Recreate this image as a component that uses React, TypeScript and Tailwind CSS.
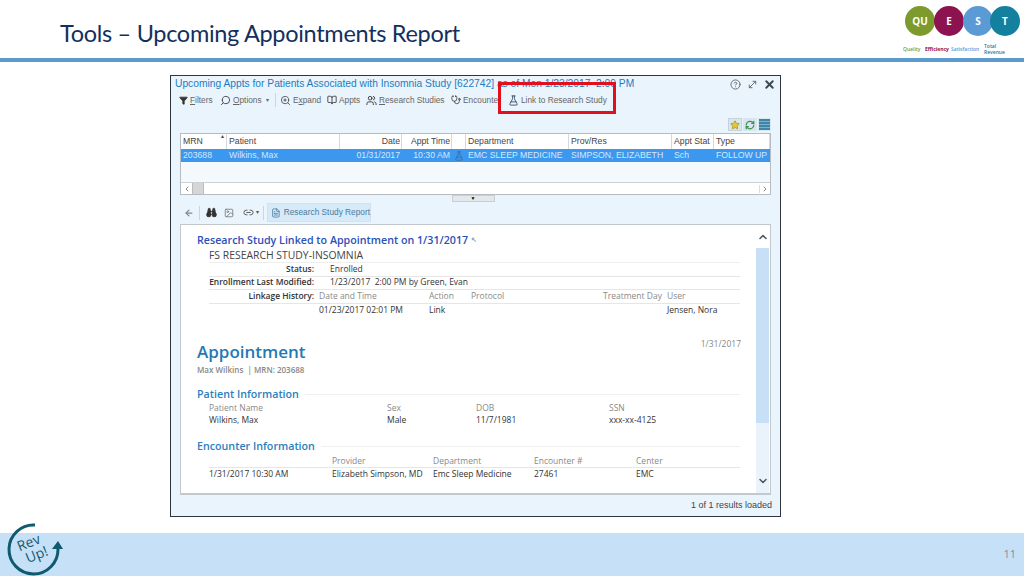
import React from "react";
import {
  ArrowLeft,
  Binoculars,
  ChevronDown,
  ChevronLeft,
  ChevronRight,
  ChevronUp,
  CircleHelp,
  FileText,
  Filter,
  FlaskConical,
  Image,
  Link2,
  MoveDiagonal,
  RefreshCw,
  Search,
  Star,
  Stethoscope,
  Users,
  X,
  ZoomIn,
  BookOpen,
} from "lucide-react";

const toolbarItems = [
  { label: "Filters", u: 0, icon: <Filter size={9} fill="#333" className="text-[#333]" />, w: "w-[41px]" },
  { label: "Options", u: 0, icon: <Search size={11} className="text-[#444] -scale-x-100" />, w: "w-[60px]" },
  { label: "Expand", u: 1, icon: <ZoomIn size={11} className="text-[#555]" />, w: "w-[47px]" },
  { label: "Appts", u: -1, icon: <BookOpen size={10} className="text-[#333]" />, w: "w-[39px]" },
  { label: "Research Studies", u: 0, icon: <Users size={11} className="text-[#333]" />, w: "w-[85px]" },
  { label: "Encounter", u: -1, icon: <Stethoscope size={10} className="text-[#444]" />, w: "w-[57px]" },
];

const columns = [
  { label: "MRN", w: "w-[46px]" },
  { label: "Patient", w: "w-[113px]" },
  { label: "Date", w: "w-[62px]", right: true },
  { label: "Appt Time", w: "w-[50px]", right: true },
  { label: "", w: "w-[14px]" },
  { label: "Department", w: "w-[103px]" },
  { label: "Prov/Res", w: "w-[103px]" },
  { label: "Appt Stat", w: "w-[42px]" },
  { label: "Type", w: "w-[56px]" },
];

const selectedRow = [
  "203688",
  "Wilkins, Max",
  "01/31/2017",
  "10:30 AM",
  "",
  "EMC SLEEP MEDICINE",
  "SIMPSON, ELIZABETH",
  "Sch",
  "FOLLOW UP",
];

const SectionHeading = ({ title, mt }: { title: string; mt: string }) => (
  <div className={`flex items-center gap-[6px] h-[14px] ${mt}`}>
    <span className="text-[10.7px] font-semibold text-[#2b80bd] whitespace-nowrap">{title}</span>
    <div className="flex-1 h-px bg-[#f0f0f0]" />
  </div>
);

const DetailRow = ({ label, children, line = true }: { label: string; children: React.ReactNode; line?: boolean }) => (
  <div className={`flex items-center h-[13.5px] ${line ? "border-b border-[#e6e6e6]" : ""}`}>
    <span className="w-[105px] shrink-0 text-right text-[8.45px] font-semibold text-[#333] whitespace-nowrap">{label}</span>
    {children}
  </div>
);

const App = () => {
  return (
    <div className="relative w-[1024px] h-[576px] flex flex-col bg-white overflow-hidden font-['Open_Sans',sans-serif]">
      <header className="h-[62px] shrink-0 flex justify-between border-b-4 border-[#5b9bd0]">
        <h1 className="pl-[60px] pt-[16px] text-[23.5px] leading-[34px] tracking-[-0.3px] text-[#12305e] font-['Lato',sans-serif]">
          Tools – Upcoming Appointments Report
        </h1>
        <div className="w-[122px] pt-[6px] flex flex-col">
          <div className="flex pl-[3px] text-white font-bold text-[10px]">
            <div className="w-[30px] h-[30px] rounded-full bg-[#7d9a2c] flex items-center justify-center">QU</div>
            <div className="w-[30px] h-[30px] rounded-full bg-[#8c1250] flex items-center justify-center -ml-px">E</div>
            <div className="w-[30px] h-[30px] rounded-full bg-[#5a9bd5] flex items-center justify-center -ml-px">S</div>
            <div className="w-[30px] h-[30px] rounded-full bg-[#14809f] flex items-center justify-center -ml-[3px]">T</div>
          </div>
          <div className="flex items-center h-[20px] pl-px pt-[5px] text-[5px] leading-[6px] font-semibold whitespace-nowrap">
            <span className="w-[22px] text-[#7d9a2c]">Quality</span>
            <span className="w-[26px] text-[#8c1250] font-bold">Efficiency</span>
            <span className="w-[33px] text-[#5a9bd5]">Satisfaction</span>
            <span className="text-[#14809f]">
              Total
              <br />
              Revenue
            </span>
          </div>
        </div>
      </header>

      <main className="flex-1 pl-[170px] pt-[13px]">
        <div className="relative w-[611px] h-[442px] border border-[#2f3640] bg-[#eaf4fd] flex flex-col font-['Liberation_Sans',sans-serif] text-[8.3px]">
          <div className="flex items-center justify-between h-[14px] mt-[1px] pl-[4px] pr-[4px]">
            <span className="text-[10.25px] text-[#1d7cc0] whitespace-nowrap">
              Upcoming Appts for Patients Associated with Insomnia Study [622742] as of Mon 1/23/2017&nbsp; 2:09 PM
            </span>
            <div className="flex items-center text-[#666]">
              <CircleHelp size={11} />
              <MoveDiagonal size={11} className="ml-[6px]" />
              <X size={13} strokeWidth={3.5} className="ml-[5px] text-[#3c4650]" />
            </div>
          </div>

          <div className="flex items-center h-[20px] -mt-px pl-[8px] text-[#666] whitespace-nowrap">
            {toolbarItems.map((item) => (
              <div key={item.label} className={`flex items-center gap-[2px] shrink-0 ${item.w}`}>
                {item.icon}
                <span>
                  {item.u >= 0 ? (
                    <>
                      {item.label.slice(0, item.u)}
                      <u>{item.label[item.u]}</u>
                      {item.label.slice(item.u + 1)}
                    </>
                  ) : (
                    item.label
                  )}
                </span>
                {item.label === "Options" && (
                  <>
                    <span className="text-[6px] ml-[2px]">▾</span>
                    <div className="w-px h-[14px] bg-[#ccd5dc] ml-[4px]" />
                  </>
                )}
              </div>
            ))}
            <div className="flex items-center gap-[2px] text-[#666]">
              <FlaskConical size={11} className="text-[#3a5268]" />
              <span>Link to Research Study</span>
            </div>
          </div>

          <div className="flex justify-end gap-px h-[13px] mt-[8px] mr-[9px]">
            <div className="w-[14px] h-[13px] bg-[#d8e6ee] border border-[#c5d3dc] flex items-center justify-center">
              <Star size={10} fill="#e6c832" className="text-[#a49427]" />
            </div>
            <div className="w-[14px] h-[13px] bg-[#d8e6ee] flex items-center justify-center">
              <RefreshCw size={10} strokeWidth={3} className="text-[#3f8f5a]" />
            </div>
            <div className="w-[13px] h-[13px] bg-[#d8e6ee] flex items-center justify-center">
              <div className="w-[11px] h-[11px] bg-[repeating-linear-gradient(to_bottom,#3d86a8_0,#3d86a8_2px,#7fb0c8_2px,#7fb0c8_3px)]" />
            </div>
          </div>

          <div className="mx-[9px] h-[62px] mt-[2px] bg-[#f4f9fd] border border-[#b6bcc2] flex flex-col shrink-0 text-[8.7px]">
            <div className="flex h-[15px] bg-white text-[#444] shrink-0">
              {columns.map((c) => (
                <div
                  key={c.label || "icon"}
                  className={`relative flex items-center shrink-0 whitespace-nowrap border-r border-[#d6d9dc] ${c.w} ${c.right ? "justify-end pr-px" : "pl-[2px]"}`}
                >
                  {c.label}
                  {c.label === "MRN" && <span className="absolute right-[1px] top-[-1px] text-[5px]">▲</span>}
                </div>
              ))}
            </div>
            <div className="flex h-[13px] bg-[#3c97ee] text-[#d4e8fc] shrink-0">
              {selectedRow.map((v, i) => (
                <div
                  key={i}
                  className={`flex items-center shrink-0 whitespace-nowrap overflow-hidden ${columns[i].w} ${columns[i].right ? "justify-end pr-[2px]" : "pl-[2px]"}`}
                >
                  {i === 4 ? <FlaskConical size={10} className="text-[#3a6fa0]" /> : v}
                </div>
              ))}
            </div>
            <div className="flex-1" />
            <div className="flex h-[12px] bg-white border-t border-[#ccd1d5] items-center shrink-0">
              <div className="w-[11px] flex justify-center">
                <ChevronLeft size={8} className="text-[#555]" />
              </div>
              <div className="w-[12px] h-full bg-[#d4d6d8] border-x border-[#bbb]" />
              <div className="flex-1" />
              <div className="w-[11px] flex justify-center border-l border-[#ddd]">
                <ChevronRight size={8} className="text-[#555]" />
              </div>
            </div>
          </div>

          <div className="h-[8px] flex justify-center shrink-0">
            <div className="w-[43px] h-[7px] ml-[-5px] bg-[#e3e8ec] border border-[#c8ced3] flex items-center justify-center text-[5px] leading-none text-black">
              ▼
            </div>
          </div>

          <div className="flex items-center h-[19px] pl-[13px] shrink-0 text-[#888]">
            <ArrowLeft size={10} strokeWidth={3} />
            <div className="w-px h-[14px] bg-[#ccd5dc] ml-[5px] mr-[6px]" />
            <Binoculars size={11} fill="#333" className="text-[#333]" />
            <Image size={10} className="ml-[7px] text-[#777]" />
            <Link2 size={11} className="ml-[9px] text-[#555]" />
            <span className="text-[6px] ml-[2px] text-[#555]">▾</span>
            <div className="w-px h-[14px] bg-[#ccd5dc] ml-[4px] mr-[3px]" />
            <div className="flex items-center gap-[3px] w-[104px] h-full pl-[3px] bg-[#d7eafa] text-[#4a7a9c] border border-[#cfe2f2] whitespace-nowrap">
              <FileText size={10} />
              <span>Research Study Report</span>
            </div>
          </div>

          <div className="flex mx-[9px] h-[271px] mt-[2px] bg-white border border-[#c3c8cc] border-b-2 shrink-0 font-['Open_Sans',sans-serif] text-[8.5px] text-[#333]">
            <div className="flex-1 pl-[16px] pr-[16px] pt-[7px] min-w-0">
              <div className="flex items-center gap-[3px] h-[16px] text-[10.7px] font-semibold text-[#2b50b8] whitespace-nowrap">
                Research Study Linked to Appointment on 1/31/2017
                <span className="text-[7px] text-[#8aa0c0]">↖</span>
              </div>
              <div className="pl-[12px]">
                <div className="h-[15px] pt-[2px] flex items-center text-[10.4px] text-[#444] whitespace-nowrap border-b border-[#eeeeee]">
                  FS RESEARCH STUDY-INSOMNIA
                </div>
                <DetailRow label="Status:">
                  <span className="pl-[16px]">Enrolled</span>
                </DetailRow>
                <DetailRow label="Enrollment Last Modified:">
                  <span className="pl-[16px]">1/23/2017&nbsp; 2:00 PM by Green, Evan</span>
                </DetailRow>
                <DetailRow label="Linkage History:">
                  <div className="flex pl-[5px] text-[#8a8a8a]">
                    <span className="w-[110px]">Date and Time</span>
                    <span className="w-[42px]">Action</span>
                    <span className="w-[132px]">Protocol</span>
                    <span className="w-[64px]">Treatment Day</span>
                    <span>User</span>
                  </div>
                </DetailRow>
                <DetailRow label="" line={false}>
                  <div className="flex pl-[5px]">
                    <span className="w-[110px]">01/23/2017 02:01 PM</span>
                    <span className="w-[42px]">Link</span>
                    <span className="w-[132px]" />
                    <span className="w-[64px]" />
                    <span>Jensen, Nora</span>
                  </div>
                </DetailRow>
              </div>

              <div className="flex justify-between h-[26px] mt-[22px]">
                <span className="text-[17px] leading-[26px] font-semibold text-[#1f7ab5]">Appointment</span>
                <span className="text-[#888] mr-[-1px] mt-[-1px]">1/31/2017</span>
              </div>
              <div className="h-[11px] mt-[-1px] flex items-center text-[8px] text-[#888] font-semibold whitespace-nowrap">
                Max Wilkins&nbsp; | MRN: 203688
              </div>

              <SectionHeading title="Patient Information" mt="mt-[12px]" />
              <div className="grid grid-cols-[178px_89px_133px_1fr] pl-[12px] mt-[1px] leading-[12px]">
                <span className="text-[#8a8a8a]">Patient Name</span>
                <span className="text-[#8a8a8a]">Sex</span>
                <span className="text-[#8a8a8a]">DOB</span>
                <span className="text-[#8a8a8a]">SSN</span>
                <span>Wilkins, Max</span>
                <span>Male</span>
                <span>11/7/1981</span>
                <span>xxx-xx-4125</span>
              </div>

              <SectionHeading title="Encounter Information" mt="mt-[13px]" />
              <div className="pl-[12px] mt-[2px]">
                <div className="grid grid-cols-[123px_101px_101px_102px_1fr] h-[13px] items-center border-b border-[#e6e6e6] text-[#8a8a8a]">
                  <span />
                  <span>Provider</span>
                  <span>Department</span>
                  <span>Encounter #</span>
                  <span>Center</span>
                </div>
                <div className="grid grid-cols-[123px_101px_101px_102px_1fr] h-[13px] items-center whitespace-nowrap">
                  <span>1/31/2017 10:30 AM</span>
                  <span>Elizabeth Simpson, MD</span>
                  <span>Emc Sleep Medicine</span>
                  <span>27461</span>
                  <span>EMC</span>
                </div>
              </div>
            </div>

            <div className="w-[13px] mr-px shrink-0 flex flex-col bg-[#eaf3fb]">
              <div className="h-[23px] flex items-center justify-center bg-white">
                <ChevronUp size={12} strokeWidth={3} className="text-[#4a5560]" />
              </div>
              <div className="h-[175px] bg-[#c8e0f6]" />
              <div className="flex-1" />
              <div className="h-[24px] flex items-center justify-center">
                <ChevronDown size={12} strokeWidth={3} className="text-[#4a5560]" />
              </div>
            </div>
          </div>

          <div className="flex-1 flex items-center justify-end pr-[8px] text-[9px] text-[#444]">
            1 of 1 results loaded
          </div>

          <div className="absolute left-[327px] top-[6px] w-[118px] h-[32px] border-[3px] border-[#e2101c]" />
        </div>
      </main>

      <footer className="h-[43px] shrink-0 bg-[#c6e0f7] flex items-center justify-end pr-[8px] text-[11px] text-[#7f8f9c]">
        11
      </footer>

      <div className="absolute left-[6px] top-[521px] w-[60px] h-[55px] text-[#0f5a6e]">
        <svg viewBox="0 0 60 55" className="absolute inset-0 w-full h-full" fill="none">
          <path d="M29 4 A24.5 24.5 0 1 0 52 28" stroke="#0f5a6e" strokeWidth="3" />
          <path d="M46 28 L52 20 L57 28 Z" fill="#0f5a6e" />
        </svg>
        <div className="absolute left-[11px] top-[14px] -rotate-[22deg] text-[14px] leading-[14px] font-['Open_Sans',sans-serif] text-center">
          <div>Rev</div>
          <div className="pl-[6px]">Up!</div>
        </div>
      </div>
    </div>
  );
};

export default App;
